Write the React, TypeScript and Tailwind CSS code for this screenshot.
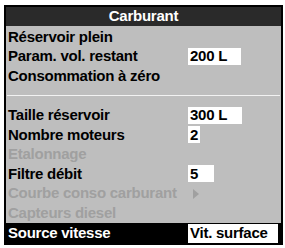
const font = { fontFamily: '"Liberation Sans", Arial, sans-serif' };

type Row = {
  label: string;
  value?: string;
  box?: string;
  disabled?: boolean;
  arrow?: boolean;
};

const topRows: Row[] = [
  { label: "Réservoir plein" },
  { label: "Param. vol. restant", value: "200 L", box: "w-[53px]" },
  { label: "Consommation à zéro" },
];

const bottomRows: Row[] = [
  { label: "Taille réservoir", value: "300 L", box: "w-[54px]" },
  { label: "Nombre moteurs", value: "2", box: "w-[12px]" },
  { label: "Etalonnage", disabled: true },
  { label: "Filtre débit", value: "5", box: "w-[26px]" },
  { label: "Courbe conso carburant", disabled: true, arrow: true },
  { label: "Capteurs diesel", disabled: true },
];

function MenuRow({ row }: { row: Row }) {
  return (
    <div className="flex h-[19.6px] items-center">
      <span
        className={`w-[182px] shrink-0 pl-[2px] ${
          row.disabled ? "text-[#a0a0a0]" : "text-black"
        }`}
      >
        {row.label}
      </span>
      {row.value && (
        <span
          className={`flex h-[17px] items-center bg-white pl-[2px] text-black ${row.box}`}
        >
          {row.value}
        </span>
      )}
      {row.arrow && (
        <svg width="6" height="10" viewBox="0 0 6 10" className="ml-[5px]">
          <path d="M0 0 L6 5 L0 10 Z" fill="#a0a0a0" />
        </svg>
      )}
    </div>
  );
}

export default function App() {
  return (
    <div
      className="h-[248px] w-[285px] bg-white pl-[4px] pt-[5px] text-[15px] font-bold tracking-[-0.25px]"
      style={font}
    >
      <div className="flex h-[240px] w-[279px] flex-col border-2 border-black bg-[#bebebe]">
        {/* Header */}
        <div className="flex h-[19px] items-center justify-center bg-[#2a2a2a] text-white">
          Carburant
        </div>

        <div className="flex flex-1 flex-col pt-[1px]">
          {topRows.map((r) => (
            <MenuRow key={r.label} row={r} />
          ))}

          <div className="flex h-[19.6px] items-center px-[1px]">
            <div className="h-[1px] w-full bg-[#f2f2f2]" />
          </div>

          {bottomRows.map((r) => (
            <MenuRow key={r.label} row={r} />
          ))}

          {/* Selected row */}
          <div className="mt-auto flex h-[21px] items-center bg-black">
            <span className="w-[182px] shrink-0 pl-[2px] text-white">
              Source vitesse
            </span>
            <span className="flex h-[19px] w-[90px] items-center bg-white pl-[2px] text-black">
              Vit. surface
            </span>
          </div>
        </div>
      </div>
    </div>
  );
}
